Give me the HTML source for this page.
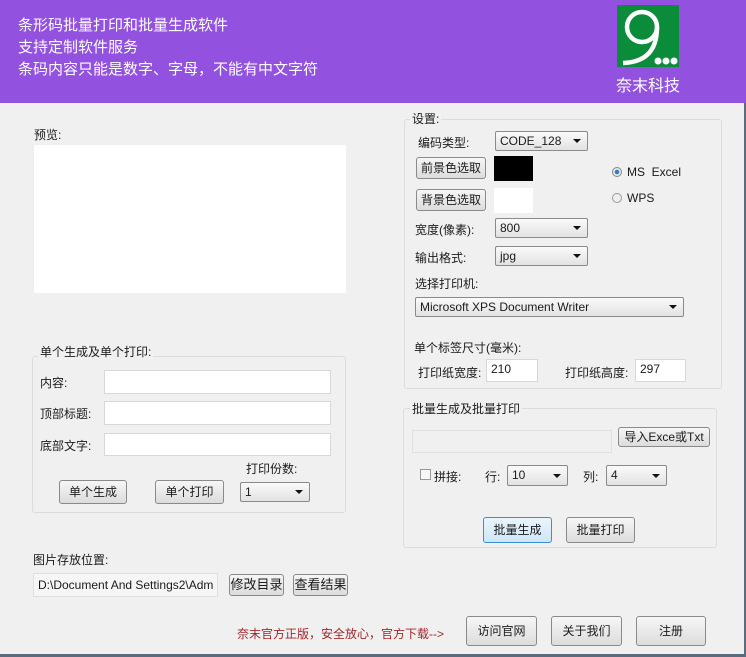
<!DOCTYPE html>
<html><head><meta charset="utf-8"><style>
*{margin:0;padding:0;box-sizing:border-box}
body{width:746px;height:657px;background:#f0f0f0;font-family:"Liberation Sans","Noto Sans CJK SC",sans-serif;font-size:12px;color:#1a1a1a;position:relative;overflow:hidden}
.a{position:absolute;white-space:nowrap}
.hdr{left:0;top:0;width:746px;height:103px;background:#9351e0}
.ht{color:#fff;font-size:15px;left:18px}
.box{position:absolute;border:1px solid #dcdcdc;border-radius:3px}
.lb{position:absolute;background:#f0f0f0;padding:0 2px;white-space:nowrap}
.inp{position:absolute;background:#fff;border:1px solid #d8d8d8}
.btn{position:absolute;border:1px solid #8a8a8a;border-radius:3px;background:linear-gradient(#f6f6f6,#dcdcdc);text-align:center;font-size:12px}
.sel{position:absolute;border:1px solid #8a8a8a;border-radius:2px;background:linear-gradient(#fafafa,#e2e2e2);padding-left:4px;font-size:12px}
.sel:after{content:"";position:absolute;right:6px;top:50%;margin-top:-2px;border-left:4px solid transparent;border-right:4px solid transparent;border-top:4px solid #111}
</style></head><body>
<div class="a hdr"></div>
<div class="a ht" style="top:14px">条形码批量打印和批量生成软件</div>
<div class="a ht" style="top:36px">支持定制软件服务</div>
<div class="a ht" style="top:58px">条码内容只能是数字、字母，不能有中文字符</div>
<svg class="a" style="left:617px;top:5px" width="62" height="62" viewBox="0 0 62 62">
<rect width="62" height="62" fill="#0b8c3a"/>
<circle cx="25" cy="22" r="15" fill="none" stroke="#fff" stroke-width="4.5"/>
<path d="M40 22 C40 42 32 57 6 58" fill="none" stroke="#fff" stroke-width="4.5"/>
<circle cx="41" cy="56" r="3.5" fill="#fff"/><circle cx="49" cy="56" r="3.5" fill="#fff"/><circle cx="57" cy="56" r="3.5" fill="#fff"/>
</svg>
<div class="a" style="left:616px;top:72px;color:#fff;font-size:16px">奈末科技</div>
<div class="a" style="left:744px;top:103px;width:2px;height:554px;background:#5b6b80"></div>
<div class="a" style="left:0;top:654px;width:746px;height:3px;background:#5b6b80"></div>

<div class="a" style="left:34px;top:126px">预览:</div>
<div class="a" style="left:34px;top:145px;width:312px;height:148px;background:#fff"></div>

<div class="box" style="left:32px;top:356px;width:314px;height:157px"></div>
<div class="lb" style="left:38px;top:343px">单个生成及单个打印:</div>
<div class="a" style="left:40px;top:374px">内容:</div>
<div class="inp" style="left:104px;top:370px;width:227px;height:24px"></div>
<div class="a" style="left:40px;top:405px">顶部标题:</div>
<div class="inp" style="left:104px;top:401px;width:227px;height:24px"></div>
<div class="a" style="left:40px;top:437px">底部文字:</div>
<div class="inp" style="left:104px;top:433px;width:227px;height:23px"></div>
<div class="a" style="left:246px;top:460px">打印份数:</div>
<div class="btn" style="left:59px;top:480px;width:68px;height:24px;line-height:22px">单个生成</div>
<div class="btn" style="left:155px;top:480px;width:69px;height:24px;line-height:22px">单个打印</div>
<div class="sel" style="left:240px;top:482px;width:70px;height:20px;line-height:18px">1</div>

<div class="a" style="left:33px;top:551px">图片存放位置:</div>
<div class="a" style="left:33px;top:573px;width:185px;height:24px;background:#f6f6f6;border:1px solid #e0e0e0;line-height:22px;padding-left:4px;overflow:hidden">D:\Document And Settings2\Adm</div>
<div class="btn" style="left:229px;top:574px;width:55px;height:22px;line-height:20px;font-size:13px">修改目录</div>
<div class="btn" style="left:293px;top:574px;width:55px;height:22px;line-height:20px;font-size:13px">查看结果</div>

<div class="a" style="left:237px;top:625px;color:#a0282d">奈末官方正版，安全放心，官方下载--></div>
<div class="btn" style="left:466px;top:616px;width:71px;height:30px;line-height:28px">访问官网</div>
<div class="btn" style="left:551px;top:616px;width:71px;height:30px;line-height:28px">关于我们</div>
<div class="btn" style="left:636px;top:616px;width:70px;height:30px;line-height:28px">注册</div>

<div class="box" style="left:404px;top:119px;width:318px;height:270px"></div>
<div class="lb" style="left:410px;top:110px">设置:</div>
<div class="a" style="left:418px;top:134px">编码类型:</div>
<div class="sel" style="left:495px;top:131px;width:93px;height:20px;line-height:18px">CODE_128</div>
<div class="btn" style="left:416px;top:157px;width:70px;height:22px;line-height:20px">前景色选取</div>
<div class="a" style="left:494px;top:156px;width:39px;height:25px;background:#000"></div>
<div class="btn" style="left:416px;top:189px;width:70px;height:22px;line-height:20px">背景色选取</div>
<div class="a" style="left:494px;top:188px;width:39px;height:25px;background:#fff"></div>
<div class="a" style="left:612px;top:167px;width:10px;height:10px;border-radius:50%;border:1px solid #888;background:radial-gradient(#2a7fc8 35%,#e8e8e8 45%)"></div>
<div class="a" style="left:627px;top:165px">MS&nbsp; Excel</div>
<div class="a" style="left:612px;top:193px;width:10px;height:10px;border-radius:50%;border:1px solid #999;background:#eee"></div>
<div class="a" style="left:627px;top:191px">WPS</div>
<div class="a" style="left:415px;top:221px">宽度(像素):</div>
<div class="sel" style="left:495px;top:218px;width:93px;height:20px;line-height:18px">800</div>
<div class="a" style="left:415px;top:249px">输出格式:</div>
<div class="sel" style="left:495px;top:246px;width:93px;height:20px;line-height:18px">jpg</div>
<div class="a" style="left:415px;top:275px">选择打印机:</div>
<div class="sel" style="left:415px;top:297px;width:269px;height:20px;line-height:18px">Microsoft XPS Document Writer</div>
<div class="a" style="left:414px;top:339px">单个标签尺寸(毫米):</div>
<div class="a" style="left:418px;top:364px">打印纸宽度:</div>
<div class="inp" style="left:486px;top:359px;width:52px;height:23px;padding:2px 4px">210</div>
<div class="a" style="left:565px;top:364px">打印纸高度:</div>
<div class="inp" style="left:635px;top:359px;width:51px;height:23px;padding:2px 4px">297</div>

<div class="box" style="left:403px;top:408px;width:314px;height:140px"></div>
<div class="lb" style="left:410px;top:400px">批量生成及批量打印</div>
<div class="a" style="left:412px;top:430px;width:200px;height:23px;border:1px solid #e0e0e0;background:#f0f0f0"></div>
<div class="btn" style="left:618px;top:427px;width:92px;height:20px;line-height:18px">导入Exce或Txt</div>
<div class="a" style="left:420px;top:469px;width:11px;height:11px;border:1px solid #999;background:#f8f8f8"></div>
<div class="a" style="left:434px;top:468px">拼接:</div>
<div class="a" style="left:485px;top:468px">行:</div>
<div class="sel" style="left:507px;top:465px;width:61px;height:21px;line-height:19px">10</div>
<div class="a" style="left:583px;top:468px">列:</div>
<div class="sel" style="left:606px;top:465px;width:61px;height:21px;line-height:19px">4</div>
<div class="btn" style="left:483px;top:517px;width:69px;height:26px;line-height:24px;border-color:#3c8fd0;background:linear-gradient(#eaf5fc,#cde6f7)">批量生成</div>
<div class="btn" style="left:566px;top:517px;width:69px;height:26px;line-height:24px">批量打印</div>
</body></html>
